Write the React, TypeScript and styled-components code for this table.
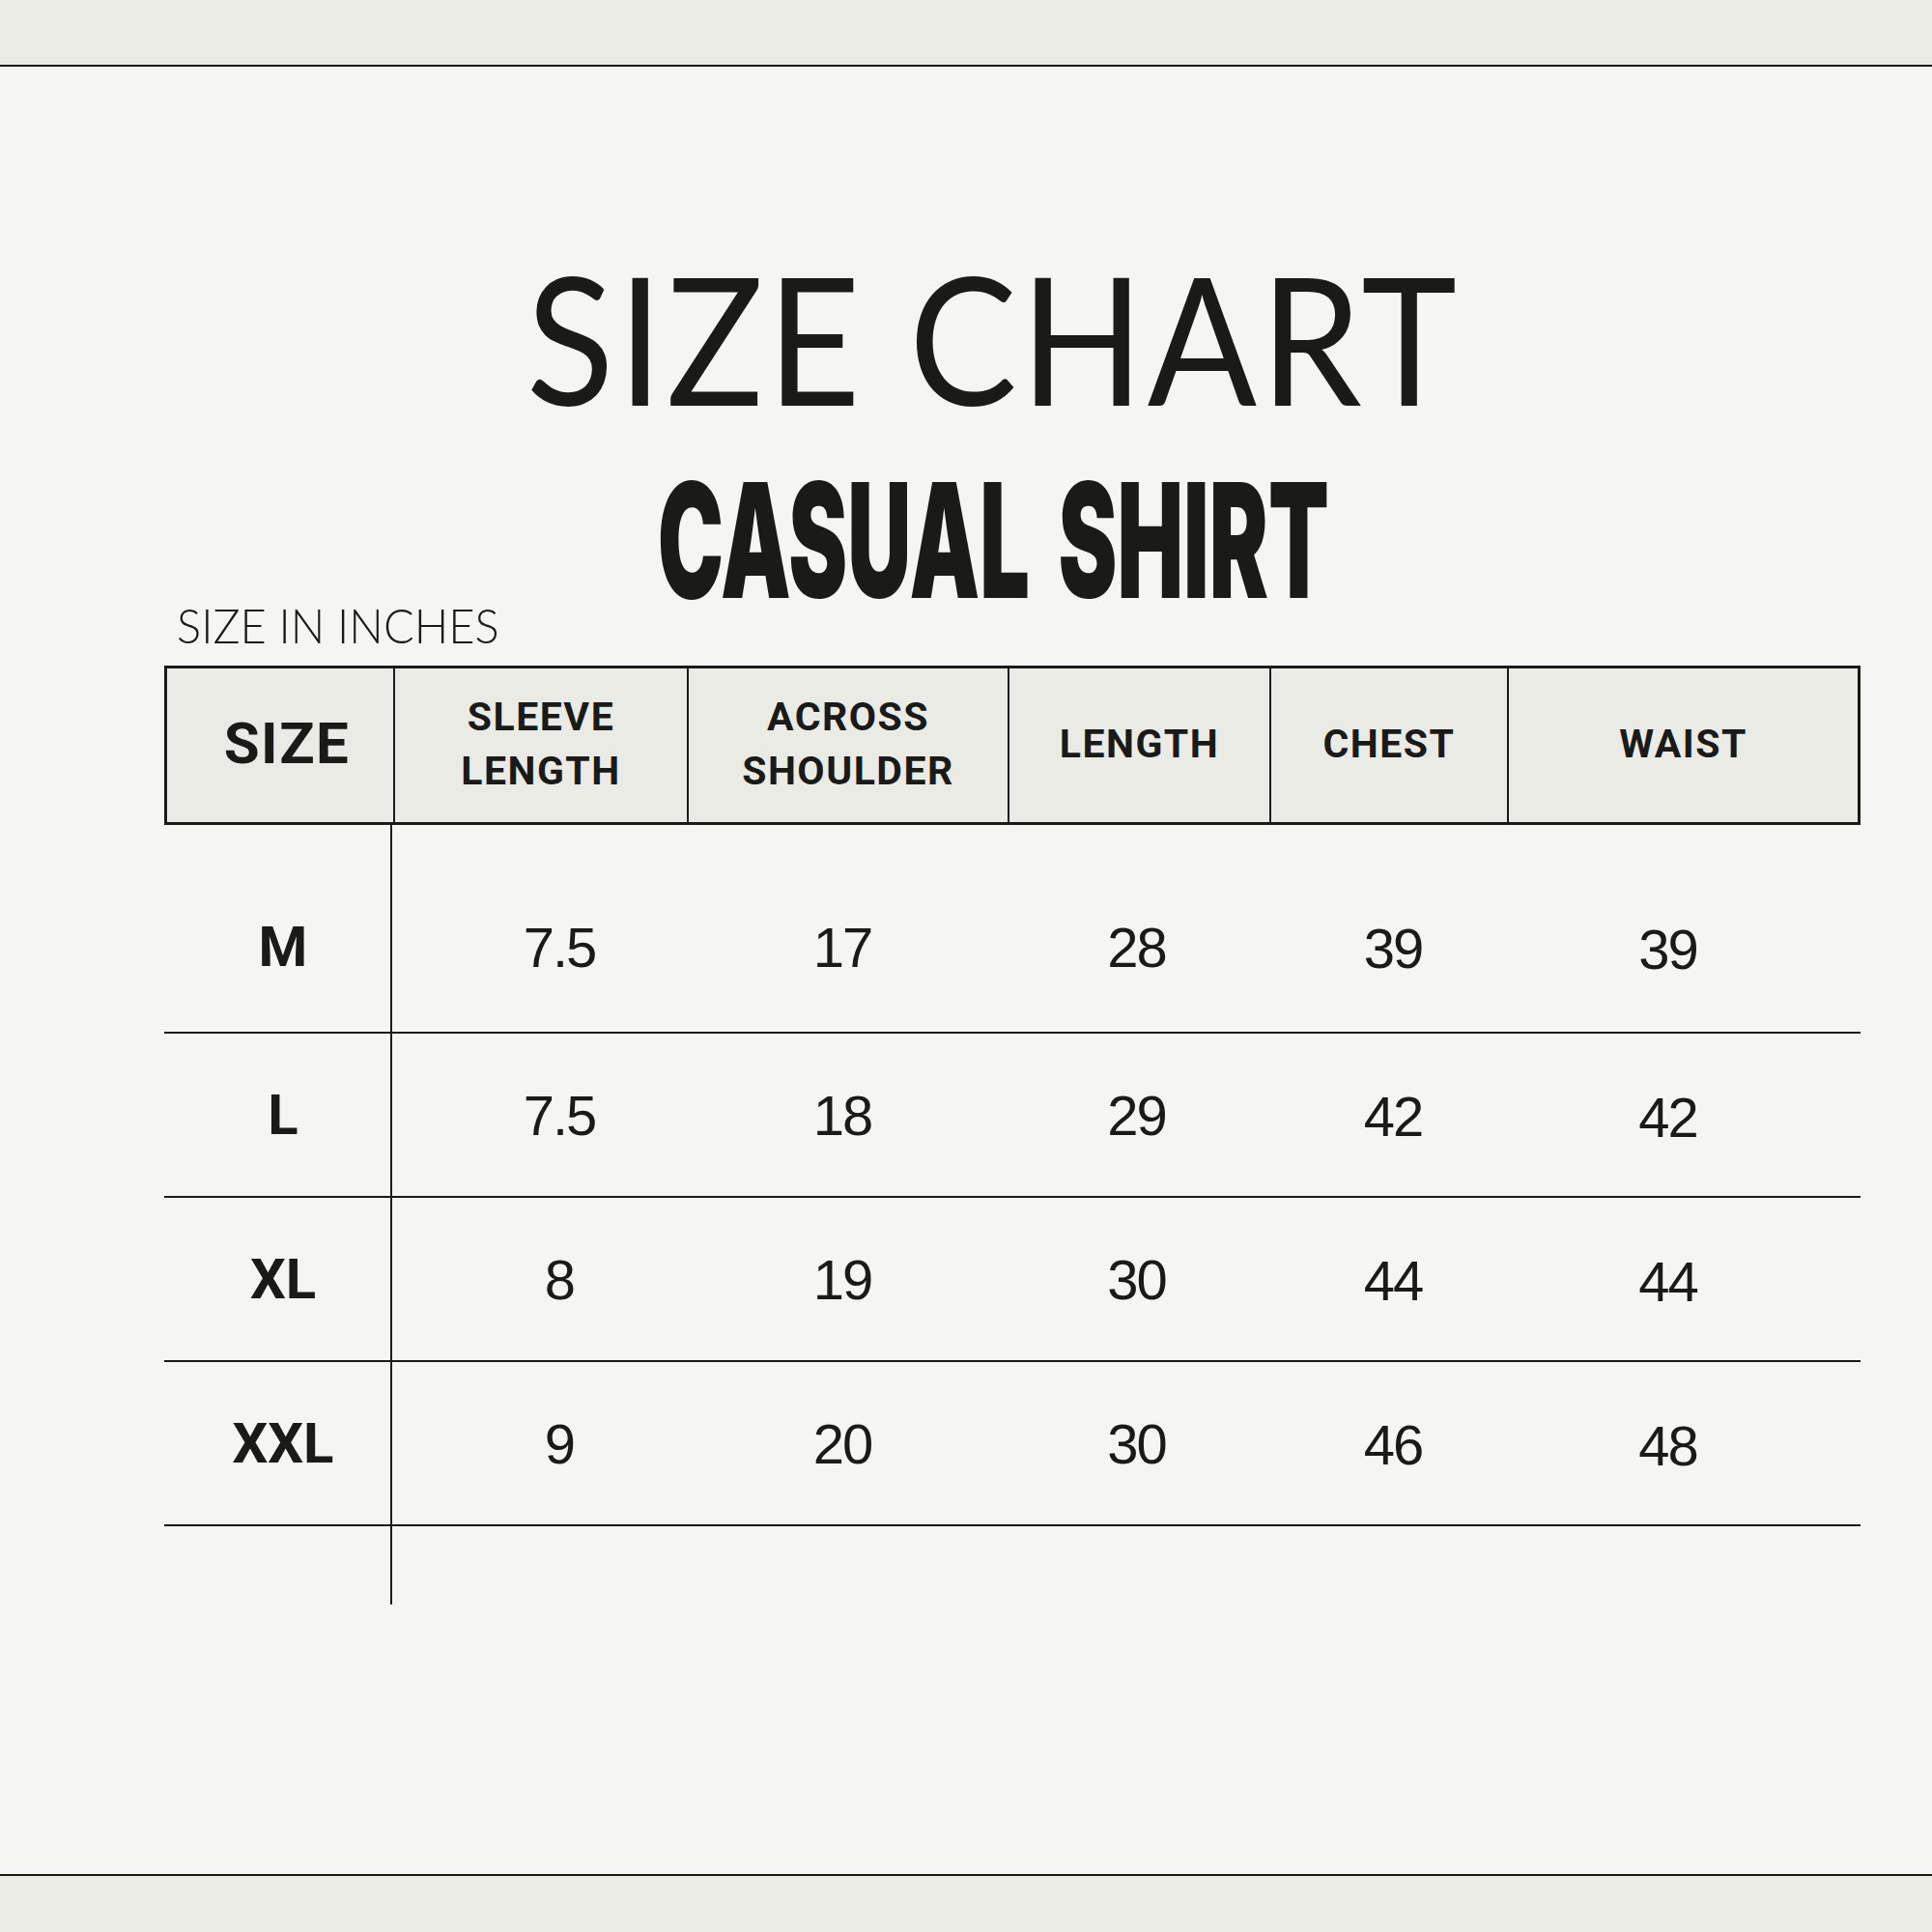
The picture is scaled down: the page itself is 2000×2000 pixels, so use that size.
import styled, { createGlobalStyle } from "styled-components";

const GlobalStyle = createGlobalStyle`
  html, body {
    margin: 0;
    padding: 0;
    background: #f5f5f3;
  }
  * {
    box-sizing: border-box;
  }
`;

const INK = "#1a1a18";

const Page = styled.div`
  width: 2000px;
  height: 2000px;
  display: flex;
  flex-direction: column;
  background: #f5f5f3;
  color: ${INK};
  overflow: hidden;
`;

const Band = styled.div<{ $edge: "top" | "bottom" }>`
  flex: 0 0 auto;
  height: ${(p) => (p.$edge === "top" ? 69 : 60)}px;
  background: #ebebe6;
  ${(p) =>
    p.$edge === "top"
      ? `border-bottom: 2px solid ${INK};`
      : `border-top: 2px solid ${INK};`}
`;

const Main = styled.main`
  flex: 1 1 auto;
  display: flex;
  flex-direction: column;
  padding-left: 170px;
`;

const TitleWrap = styled.div`
  margin-top: 187px;
  width: 1756px;
  padding-right: 40px;
  display: flex;
  justify-content: center;
`;

const Title = styled.h1`
  margin: 0;
  display: inline-block;
  font-family: Lato, "Open Sans", sans-serif;
  font-weight: 400;
  font-size: 185px;
  line-height: 1;
  letter-spacing: 4px;
  white-space: nowrap;
  transform: scaleX(0.905);
`;

const SubtitleWrap = styled.div`
  margin-top: 53px;
  width: 1756px;
  height: 130px;
  padding-right: 40px;
  display: flex;
  justify-content: center;
`;

const Subtitle = styled.h2`
  margin: 0;
  display: inline-block;
  font-family: Inter, Roboto, sans-serif;
  font-weight: 900;
  font-size: 165px;
  line-height: 130px;
  word-spacing: 20px;
  transform: scaleX(0.555);
  white-space: nowrap;
`;

const Caption = styled.div`
  margin: -1px 0 0 13px;
  font-family: Lato, "Open Sans", sans-serif;
  font-weight: 300;
  font-size: 49px;
  line-height: 1;
  white-space: nowrap;
  transform: scaleX(0.96);
  transform-origin: left center;
`;

const Table = styled.div`
  margin-top: 17px;
  width: 1756px;
  display: flex;
  flex-direction: column;
`;

const HeaderRow = styled.div`
  height: 165px;
  display: grid;
  grid-template-columns: 234px 304px 332px 271px 246px 363px;
  border: 3px solid ${INK};
  background: #ebebe6;
`;

const HeadCell = styled.div<{ $first?: boolean; $nudge?: number }>`
  display: flex;
  flex-direction: column;
  align-items: center;
  justify-content: center;
  text-align: center;
  font-family: Roboto, "Liberation Sans", sans-serif;
  font-weight: 700;
  font-size: ${(p) => (p.$first ? 60 : 41)}px;
  line-height: 56px;
  letter-spacing: 1.5px;
  padding-bottom: 4px;
  ${(p) => (p.$first ? "" : `border-left: 2px solid ${INK};`)}
  padding-left: ${(p) => Math.max(0, (p.$nudge ?? 0) * 2)}px;
  padding-right: ${(p) => Math.max(0, -(p.$nudge ?? 0) * 2)}px;
`;

const Row = styled.div<{ $lead?: boolean; $tail?: boolean }>`
  display: grid;
  grid-template-columns: 236px 304px 332px 271px 246px 367px;
  height: ${(p) => (p.$tail ? 81 : p.$lead ? 216 : 170)}px;
  ${(p) => (p.$tail ? "" : `border-bottom: 2px solid ${INK};`)}
`;

const Cell = styled.div<{
  $label?: boolean;
  $lead?: boolean;
  $nudge?: number;
  $drop?: number;
}>`
  display: flex;
  align-items: center;
  justify-content: center;
  font-family: ${(p) =>
    p.$label ? `Roboto, "Liberation Sans", sans-serif` : `"Liberation Sans", Arial, sans-serif`};
  font-weight: ${(p) => (p.$label ? 700 : 400)};
  font-size: 58px;
  letter-spacing: ${(p) => (p.$label ? 0 : -2)}px;
  padding-left: ${(p) => Math.max(0, (p.$nudge ?? 0) * 2)}px;
  padding-right: ${(p) => Math.max(0, -(p.$nudge ?? 0) * 2)}px;
  padding-top: ${(p) => (p.$lead ? 38 : 0) + (p.$drop ?? 0) * 2}px;
  ${(p) => (p.$label ? `border-right: 2px solid ${INK};` : "")}
`;

const headers: string[][] = [
  ["SLEEVE", "LENGTH"],
  ["ACROSS", "SHOULDER"],
  ["LENGTH"],
  ["CHEST"],
  ["WAIST"],
];

const valueNudge = [21, -4, -1, 6, -16];
const valueDrop = [0, 0, 0, 1, 2];

const rows: { size: string; values: string[] }[] = [
  { size: "M", values: ["7.5", "17", "28", "39", "39"] },
  { size: "L", values: ["7.5", "18", "29", "42", "42"] },
  { size: "XL", values: ["8", "19", "30", "44", "44"] },
  { size: "XXL", values: ["9", "20", "30", "46", "48"] },
];

export default function App() {
  return (
    <Page>
      <GlobalStyle />
      <Band $edge="top" />
      <Main>
        <TitleWrap>
          <Title>SIZE CHART</Title>
        </TitleWrap>
        <SubtitleWrap>
          <Subtitle>CASUAL SHIRT</Subtitle>
        </SubtitleWrap>
        <Caption>SIZE IN INCHES</Caption>
        <Table>
          <HeaderRow>
            <HeadCell $first $nudge={7}>
              SIZE
            </HeadCell>
            {headers.map((lines) => (
              <HeadCell key={lines.join(" ")}>
                {lines.map((l) => (
                  <span key={l}>{l}</span>
                ))}
              </HeadCell>
            ))}
          </HeaderRow>
          {rows.map((r, i) => (
            <Row key={r.size} $lead={i === 0}>
              <Cell $label $lead={i === 0} $nudge={6}>
                {r.size}
              </Cell>
              {r.values.map((v, j) => (
                <Cell
                  key={j}
                  $lead={i === 0}
                  $nudge={valueNudge[j]}
                  $drop={valueDrop[j]}
                >
                  {v}
                </Cell>
              ))}
            </Row>
          ))}
          <Row $tail>
            <Cell $label />
          </Row>
        </Table>
      </Main>
      <Band $edge="bottom" />
    </Page>
  );
}
